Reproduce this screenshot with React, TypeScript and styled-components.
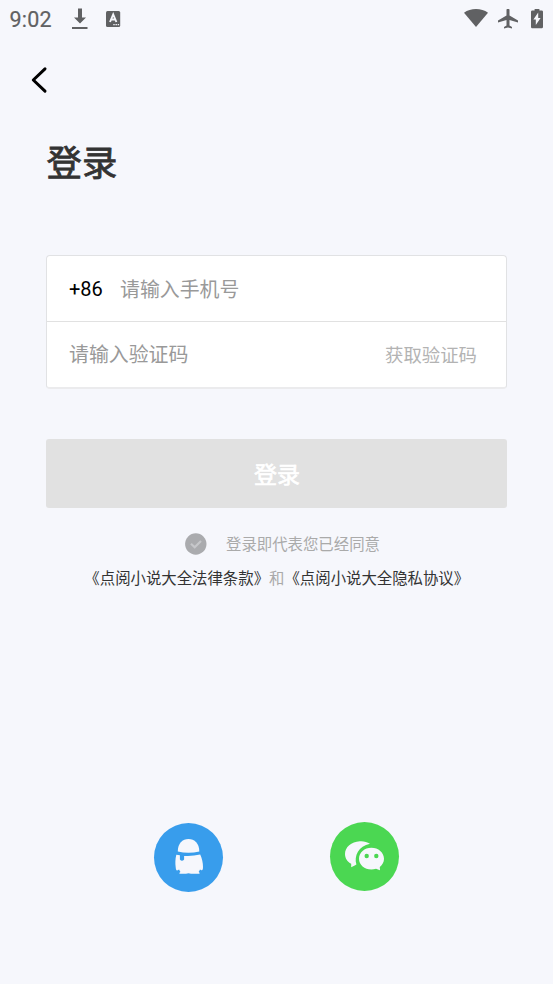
import React from 'react';
import styled, { createGlobalStyle } from 'styled-components';

const GlobalStyle = createGlobalStyle`
  * { box-sizing: border-box; }
  body { margin: 0; background: #f6f7fc; }
  button, input { font: inherit; border: 0; padding: 0; background: none; }
`;

const Screen = styled.main`
  width: 553px;
  height: 984px;
  overflow: hidden;
  display: flex;
  flex-direction: column;
  background: #f6f7fc;
  font-family: Roboto, 'Noto Sans CJK SC', sans-serif;
`;

const StatusBar = styled.header`
  height: 38px;
  padding: 0 10px 0 9.5px;
  display: flex;
  justify-content: space-between;
  align-items: center;
  color: #606163;
`;

const StatusGroup = styled.div<{ $gap: number }>`
  display: flex;
  align-items: center;
  gap: ${(p) => p.$gap}px;
  svg { display: block; }
`;

const Clock = styled.span`
  width: 44.5px;
  padding-top: 2px;
  font-size: 21.5px;
  line-height: 36px;
  white-space: nowrap;
  letter-spacing: 0.2px;
  -webkit-text-stroke: 0.2px #606163;
`;

const NavBar = styled.nav`
  height: 84px;
  padding: 28px 0 0 30px;
`;

const BackButton = styled.button`
  display: block;
  width: 20px;
  height: 28px;
  svg { display: block; }
`;

const Title = styled.h1`
  margin: 16px 0 0 46.5px;
  height: 52px;
  font-size: 35.4px;
  line-height: 52px;
  font-weight: 400;
  color: #333;
  -webkit-text-stroke: 0.8px #333;
`;

const Form = styled.form`
  margin: 65px 46px 0;
  display: flex;
  flex-direction: column;
`;

const Fields = styled.div`
  height: 134px;
  border: 1px solid #e1e2e4;
  border-bottom-width: 2px;
  border-bottom-color: #ebebed;
  border-radius: 4px;
  background: #fff;
`;

const Field = styled.div<{ $divided?: boolean }>`
  height: ${(p) => (p.$divided ? 66 : 65)}px;
  padding: ${(p) => (p.$divided ? 3 : 1)}px 29px 0 22px;
  display: flex;
  align-items: center;
  border-bottom: ${(p) => (p.$divided ? '1px solid #e1e1e1' : '0')};
`;

const CountryCode = styled.span`
  width: 51px;
  padding-bottom: 2px;
  font-size: 20px;
  line-height: 24px;
  color: #000;
`;

const Input = styled.input`
  flex: 1;
  min-width: 0;
  height: 40px;
  outline: 0;
  font-size: 19.9px;
  &::placeholder { color: #999; opacity: 1; }
`;

const CodeButton = styled.button`
  padding-top: 1px;
  font-size: 18.4px;
  line-height: 28px;
  color: #b3b3b3;
  white-space: nowrap;
`;

const LoginButton = styled.button`
  height: 69px;
  margin-top: 50px;
  padding: 0 0 2px 1px;
  border-radius: 3px;
  background: #e1e1e1;
  color: #fff;
  font-size: 23px;
  font-weight: 400;
  -webkit-text-stroke: 0.7px #fff;
`;

const Consent = styled.div`
  height: 24px;
  margin-top: 24px;
  padding-left: 184.5px;
  display: flex;
  align-items: center;
  font-size: 15.4px;
  line-height: 24px;
  color: #aaa;
  svg { display: block; margin-right: 19.5px; }
`;

const ConsentText = styled.span`
  padding-top: 2px;
`;

const Agreements = styled.p`
  margin: 11px 0 0;
  padding-left: 0.5px;
  text-align: center;
  font-size: 15.4px;
  line-height: 24px;
  color: #aaa;
  white-space: nowrap;
`;

const AgreementLink = styled.span`
  color: #333;
`;

const SocialLogins = styled.footer`
  margin-top: 231px;
  display: flex;
  justify-content: center;
  gap: 107px;
`;

const SocialButton = styled.button<{ $color: string; $offset: number }>`
  width: 69px;
  height: 69px;
  margin-top: ${(p) => p.$offset}px;
  border-radius: 50%;
  background: ${(p) => p.$color};
  svg { display: block; }
`;

const DownloadIcon = () => (
  <svg width="17" height="22" viewBox="0 0 17 22" fill="currentColor">
    <path d="M6 .5h4v9h4l-6 6-6-6h4z" />
    <path d="M0 19h15.500v2H0z" />
  </svg>
);

const LanguageIcon = () => (
  <svg width="16" height="18" viewBox="0 0 16 18">
    <rect x="0" y="1" width="14.200" height="16" rx="1.500" fill="currentColor" />
    <path d="M4 12 7.200 4.500 10.400 12M5 9.500h4.400" fill="none" stroke="#f6f7fc" strokeWidth="1.900" />
    <path d="M7.300 14h1.400v1.200H7.300zM9.500 14h1.400v1.200H9.500zM11.700 14h1.400v1.200h-1.400z" fill="#f6f7fc" />
  </svg>
);

const WifiIcon = () => (
  <svg width="24" height="20" viewBox="0 0 24 20" fill="currentColor">
    <path d="M0 3.700C3.400 1.300 7.400.1 12 .1s8.600 1.200 12 3.600L12 18z" />
  </svg>
);

const PlaneIcon = () => (
  <svg width="20" height="20" viewBox="1.500 2.500 20 20" fill="currentColor">
    <path d="M21.500 16v-2l-8.500-5V3.500c0-.83-.67-1.500-1.500-1.500S10 2.670 10 3.500V9l-8.500 5v2l8.500-2.500V19l-2.500 1.500V22l4-1 4 1v-1.500L13 19v-5.500l8.500 2.500z" />
  </svg>
);

const BatteryIcon = () => (
  <svg width="12" height="20" viewBox="7 3 10 20" preserveAspectRatio="none" fill="currentColor">
    <path d="M15.670 4.500H14V3h-4v1.500H8.330C7.600 4.500 7 5 7 5.700v15.330C7 21.700 7.600 22.300 8.330 22.300h7.330c.74 0 1.340-.6 1.340-1.330V5.700C17 5 16.400 4.500 15.670 4.500zM11 19v-5.500H9L13 6.500V12h2l-4 7z" />
  </svg>
);

const BackIcon = () => (
  <svg width="20" height="28" viewBox="0 0 20 28" fill="none" stroke="#000" strokeWidth="3" strokeLinecap="round" strokeLinejoin="round">
    <path d="M15 2.900 3.300 14 15 25.200" />
  </svg>
);

const CheckIcon = () => (
  <svg width="22" height="22" viewBox="0 0 22 22">
    <circle cx="10.800" cy="11" r="10.700" fill="#aaabae" />
    <path d="m6 10.700 3.700 3.500 6.300-6.200" fill="none" stroke="#c6c7ca" strokeWidth="2.200" />
  </svg>
);

const QQIcon = () => (
  <svg width="69" height="69" viewBox="0 0 69 69" fill="#f6f7fc">
    <path d="M23.800 28.400C23.800 20.400 28.500 16 34.500 16s10.800 4.400 10.800 12.400Q34.500 31 23.800 28.400z" />
    <path d="M22.300 31.800l3.600.5v4.200q2.100 2.600 4.200 0V32.900q8 .6 16.100-1.300c1.800 3.800 2.900 8.500 2.800 12.500 0 2.500-.7 3.700-1.700 3.100l-1.300-.8c-.3 1-.8 1.800-1.400 2.500.9.300 1.100.9.900 1.900H37l-2.500-.5-2.500.5h-6.500c-.2-1 .1-1.600 1-1.900-.6-.7-1.100-1.500-1.400-2.500l-1.500.9c-1.100.7-1.800-.6-1.900-3C21.200 40.400 21.200 36.200 22.300 31.800z" />
  </svg>
);

const WeChatIcon = () => (
  <svg width="69" height="69" viewBox="0 0 69 69">
    <path fill="#f6f7fc" d="M40 21.700C37 19.900 33.500 19 29.800 19.300 21.300 19.700 15 25.200 15 32c0 4.200 2.400 7.700 6.200 9.800v3.400l4-2c.6-.3.900-.3 1.200-.6-2.500-8.600 2.100-18.700 13.600-20.900z" />
    <path fill="#f6f7fc" d="M41.400 25.800C34.500 25.800 29 30.700 29 36.700s5.500 10.800 12.400 10.800c1.600 0 3.200-.3 4.600-.8l4 1.500-.2-3.300c2.600-2 4.200-4.900 4.200-8.200C54 30.700 48.300 25.800 41.400 25.800z" />
    <circle cx="36.700" cy="34" r="2.200" fill="#4bd752" />
    <circle cx="46.300" cy="34" r="2.200" fill="#4bd752" />
  </svg>
);

export default function App() {
  return (
    <Screen>
      <GlobalStyle />
      <StatusBar>
        <StatusGroup $gap={17.5}>
          <Clock>9:02</Clock>
          <DownloadIcon />
          <LanguageIcon />
        </StatusGroup>
        <StatusGroup $gap={13}>
          <StatusGroup $gap={10}>
            <WifiIcon />
            <PlaneIcon />
          </StatusGroup>
          <BatteryIcon />
        </StatusGroup>
      </StatusBar>
      <NavBar>
        <BackButton aria-label="返回"><BackIcon /></BackButton>
      </NavBar>
      <Title>登录</Title>
      <Form onSubmit={(e) => e.preventDefault()}>
        <Fields>
          <Field $divided>
            <CountryCode>+86</CountryCode>
            <Input type="tel" placeholder="请输入手机号" />
          </Field>
          <Field>
            <Input placeholder="请输入验证码" />
            <CodeButton type="button">获取验证码</CodeButton>
          </Field>
        </Fields>
        <LoginButton type="submit">登录</LoginButton>
      </Form>
      <Consent><CheckIcon /><ConsentText>登录即代表您已经同意</ConsentText></Consent>
      <Agreements>
        <AgreementLink>《点阅小说大全法律条款》</AgreementLink>和<AgreementLink>《点阅小说大全隐私协议》</AgreementLink>
      </Agreements>
      <SocialLogins>
        <SocialButton $color="#389dec" $offset={1} aria-label="QQ"><QQIcon /></SocialButton>
        <SocialButton $color="#4bd752" $offset={0} aria-label="微信"><WeChatIcon /></SocialButton>
      </SocialLogins>
    </Screen>
  );
}
